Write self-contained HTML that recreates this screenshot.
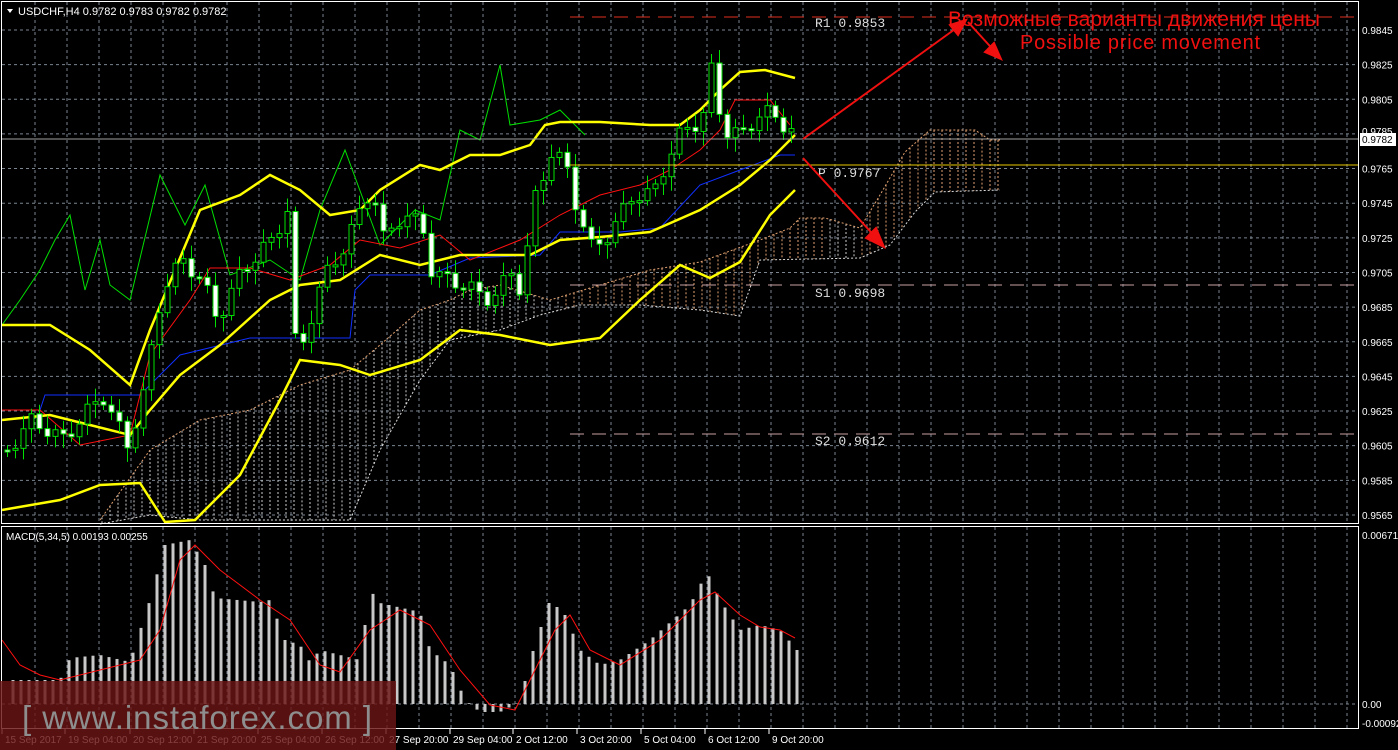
<!DOCTYPE html>
<html><head><meta charset="utf-8"><style>
html,body{margin:0;padding:0;background:#000;width:1398px;height:750px;overflow:hidden}
svg{display:block}
text{font-family:"Liberation Sans","DejaVu Sans",sans-serif}
.ax{fill:#fff;font-size:10px}
.lv{fill:#ddd;font-family:"Liberation Mono",monospace;font-size:13px}
</style></head><body>
<svg id="s" width="1398" height="750" xmlns="http://www.w3.org/2000/svg">
<rect width="1398" height="750" fill="#000"/>
<g id="grid"></g>
<g id="cloud"></g>
<g id="lines"></g>
<g id="candles"></g>
<g id="macd"></g>
<rect x="1.5" y="1.5" width="1357" height="522" fill="none" stroke="#fff"/>
<rect x="1.5" y="526.5" width="1357" height="202" fill="none" stroke="#fff"/>
<line x1="570" y1="17" x2="1358" y2="17" stroke="#e03020" stroke-dasharray="14,8" stroke-width="1"/>
<line x1="570" y1="285" x2="1358" y2="285" stroke="#c8a0a0" stroke-dasharray="14,8"/>
<line x1="570" y1="434" x2="1358" y2="434" stroke="#c8a0a0" stroke-dasharray="14,8"/>
<line x1="570" y1="165" x2="1358" y2="165" stroke="#e8c800"/>
<line x1="2" y1="139" x2="1358" y2="139" stroke="#a0a0a0"/>
<text x="815" y="27" class="lv">R1 0.9853</text>
<text x="818" y="177" class="lv">P 0.9767</text>
<text x="815" y="297" class="lv">S1 0.9698</text>
<text x="815" y="445" class="lv">S2 0.9612</text>
<g stroke="#f01010" stroke-width="2" fill="#f01010">
<line x1="803" y1="139" x2="962" y2="24"/>
<polygon points="966,20 950,25 958,35"/>
<line x1="968" y1="22" x2="998" y2="55"/>
<polygon points="1001,59 985,52 994,43" />
<line x1="803" y1="158" x2="880" y2="242"/>
<polygon points="884,247 866,238 876,228"/>
</g>
<text x="948" y="26" fill="#f01010" font-size="21" textLength="372">Возможные варианты движения цены</text>
<text x="1020" y="49" fill="#f01010" font-size="20" textLength="240">Possible price movement</text>
<polygon points="7,9 13,9 10,13" fill="#fff"/>
<text x="18" y="15" fill="#fff" font-size="11">USDCHF,H4  0.9782 0.9783 0.9782 0.9782</text>
<text x="6" y="540" fill="#fff" font-size="10">MACD(5,34,5) 0.00193 0.00255</text>
<g class="ax" id="pax"></g>
<rect x="1360" y="133" width="36" height="13" fill="#fff"/>
<text x="1362" y="143" font-size="10" fill="#000">0.9782</text>
<text x="1362" y="539" class="ax">0.00671</text>
<text x="1362" y="708" class="ax">0.00</text>
<text x="1362" y="727" class="ax">-0.00092</text>
<g id="tax" class="ax"></g>
<rect x="0" y="681" width="396" height="69" fill="#6a1515" fill-opacity="0.82"/>
<text x="22" y="729" fill="#8e8e8e" font-size="33" textLength="350">[ www.instaforex.com ]</text>
</svg>
<script>
(function(){
var NS="http://www.w3.org/2000/svg";
function el(p,t,a){var e=document.createElementNS(NS,t);for(var k in a)e.setAttribute(k,a[k]);p.appendChild(e);return e;}
function interp(pts,x){if(x<=pts[0][0])return pts[0][1];for(var i=1;i<pts.length;i++){if(x<=pts[i][0]){var a=pts[i-1],b=pts[i];return a[1]+(b[1]-a[1])*(x-a[0])/(b[0]-a[0]);}}return pts[pts.length-1][1];}
var g=document.getElementById('grid');
for(var x=35;x<1358;x+=32){el(g,'line',{x1:x,y1:2,x2:x,y2:523,stroke:'#7a8590','stroke-dasharray':'3,3'});el(g,'line',{x1:x,y1:527,x2:x,y2:728,stroke:'#7a8590','stroke-dasharray':'3,3'});}
var pax=document.getElementById('pax');
for(var i=0;i<15;i++){var y=30+i*34.64;el(g,'line',{x1:2,y1:y,x2:1358,y2:y,stroke:'#7a8590','stroke-dasharray':'3,3'});
 var t;if(i!=3){t=el(pax,'text',{x:1362,y:y+4});t.textContent=(0.9845-i*0.002).toFixed(4);}else{t=el(pax,'text',{x:1362,y:y+1});t.textContent='0.9785';}}
el(g,'line',{x1:2,y1:704,x2:1358,y2:704,stroke:'#7a8590','stroke-dasharray':'3,3'});
var tl=[["15 Sep 2017",3],["19 Sep 04:00",66],["20 Sep 12:00",131],["21 Sep 20:00",195],["25 Sep 04:00",259],["26 Sep 12:00",323],["27 Sep 20:00",387],["29 Sep 04:00",451],["2 Oct 12:00",514],["3 Oct 20:00",578],["5 Oct 04:00",642],["6 Oct 12:00",706],["9 Oct 20:00",770]];
var tax=document.getElementById('tax');
tl.forEach(function(a){var t=el(tax,'text',{x:a[1]+2,y:743});t.textContent=a[0];el(tax,'line',{x1:a[1]-1,y1:729,x2:a[1]-1,y2:734,stroke:'#fff'});});
var cu=[[100,520],[150,450],[200,420],[250,410],[300,385],[350,370],[380,345],[420,310],[450,300],[470,290],[500,285],[550,300],[600,285],[650,270],[700,262],[760,240],[790,228],[800,218],[825,218],[860,228],[880,195],[905,152],[930,130],[975,130],[990,140],[1000,140]];
var cl=[[100,524],[150,515],[200,520],[350,520],[380,450],[420,380],[450,340],[500,330],[540,315],[580,305],[640,305],[700,310],[740,316],[760,260],[860,258],[890,245],[915,212],[935,192],[1000,190]];
var c=document.getElementById('cloud');
for(var x=102;x<=1000;x+=8){var a=interp(cu,x),b=interp(cl,x);var col=(x>560&&x<830)||x>860?'#e0a070':'#ccc';el(c,'line',{x1:x,y1:a,x2:x,y2:b,stroke:col,'stroke-dasharray':'2,2','stroke-width':1});}
function pl(pts,col,w,dash){el(document.getElementById('lines'),'polyline',{points:pts.map(function(p){return p.join(',')}).join(' '),fill:'none',stroke:col,'stroke-width':w,'stroke-dasharray':dash||''});}
pl(cu,'#e0a070',1,'2,2');pl(cl,'#ddd',1,'2,2');
pl([[2,325],[20,300],[40,270],[55,240],[70,215],[85,290],[100,240],[110,285],[130,300],[160,175],[185,225],[205,185],[230,275],[270,260],[300,280],[320,210],[345,150],[380,245],[415,210],[440,220],[460,130],[480,140],[500,65],[510,125],[540,120],[560,110],[585,135]],'#00e000',1);
pl([[2,410],[40,410],[45,395],[140,395],[180,355],[250,338],[350,338],[355,290],[370,275],[430,275],[470,258],[540,255],[560,232],[620,232],[660,228],[700,185],[740,170],[780,155],[795,155]],'#1030ff',1);
pl([[2,410],[40,410],[80,445],[130,435],[150,355],[190,300],[210,268],[250,268],[290,280],[330,265],[360,240],[400,248],[440,235],[470,260],[520,240],[560,215],[600,195],[640,185],[670,170],[700,150],[720,130],[735,100],[770,100],[790,125]],'#ff1010',1);
pl([[2,325],[50,325],[90,350],[130,385],[150,330],[200,210],[240,195],[270,175],[300,190],[330,215],[360,210],[380,190],[420,165],[440,170],[470,155],[500,155],[530,145],[545,125],[560,122],[600,122],[650,125],[680,125],[700,110],[720,90],[740,72],[765,70],[795,78]],'#ffff00',2.5);
pl([[2,420],[50,415],[90,425],[130,435],[150,410],[180,375],[220,345],[270,300],[300,285],[340,280],[380,255],[420,265],[460,255],[500,255],[530,255],[560,240],[600,237],[650,232],[700,210],[740,185],[770,160],[795,135]],'#ffff00',2.5);
pl([[2,510],[60,500],[100,485],[140,483],[165,522],[195,520],[240,475],[280,400],[300,360],[340,365],[370,375],[420,360],[460,330],[500,335],[550,345],[600,338],[640,300],[680,265],[710,278],[740,262],[770,215],[795,190]],'#ffff00',2.5);
var cp=[[5,450],[30,420],[60,440],[100,395],[125,445],[140,400],[160,290],[180,260],[200,280],[215,320],[240,270],[270,240],[285,210],[290,340],[300,345],[320,280],[340,250],[370,185],[380,240],[400,215],[420,225],[430,275],[450,280],[470,290],[490,300],[510,270],[520,295],[530,205],[550,150],[565,170],[575,210],[590,250],[610,230],[630,195],[650,195],[665,160],[680,130],[700,120],[710,65],[720,130],[740,135],[760,110],[790,130]];
var cd=document.getElementById('candles');var prev=450;
for(var i=0;i<99;i++){var x=5+i*8;var cls=interp(cp,x)+Math.sin(i*1.7)*8;var o=prev;prev=cls;var tp=Math.min(o,cls),bt=Math.max(o,cls);if(bt-tp<2)bt=tp+2;
 el(cd,'line',{x1:x+2.5,y1:tp-5-(i%3)*4,x2:x+2.5,y2:bt+5+(i%4)*3,stroke:'#00e000'});
 el(cd,'rect',{x:x,y:tp,width:5,height:bt-tp,fill:cls<o?'#000':'#fff',stroke:'#00e000'});}
var mt=[[10,680],[60,680],[70,658],[100,655],[130,662],[150,600],[165,545],[190,540],[205,565],[215,598],[260,602],[270,600],[285,640],[300,645],[310,662],[320,650],[360,660],[370,590],[380,603],[420,612],[430,650],[450,665],[465,700],[480,712],[500,712],[520,702],[530,660],[550,600],[565,615],[580,650],[600,665],[620,660],[650,640],[690,605],[707,572],[720,600],[740,630],[760,625],[780,630],[797,650]];
var sg=[[2,640],[20,665],[40,675],[60,680],[100,670],[140,660],[160,630],[180,560],[195,545],[220,570],[260,600],[290,620],[320,665],[340,672],[370,630],[400,610],[430,625],[460,670],[490,705],[515,710],[535,670],[555,630],[570,615],[590,650],[620,665],[660,640],[700,600],[715,592],[740,615],[760,627],[780,630],[795,638]];
var m=document.getElementById('macd');
for(var x=797;x>=8;x-=8){var t=interp(mt,x);el(m,'rect',{x:x-1.5,y:Math.min(t,704),width:3,height:Math.abs(704-t),fill:'#c8c8c8'});}
el(m,'polyline',{points:sg.map(function(p){return p.join(',')}).join(' '),fill:'none',stroke:'#ff1010','stroke-width':1});
})();
</script>
</body></html>
